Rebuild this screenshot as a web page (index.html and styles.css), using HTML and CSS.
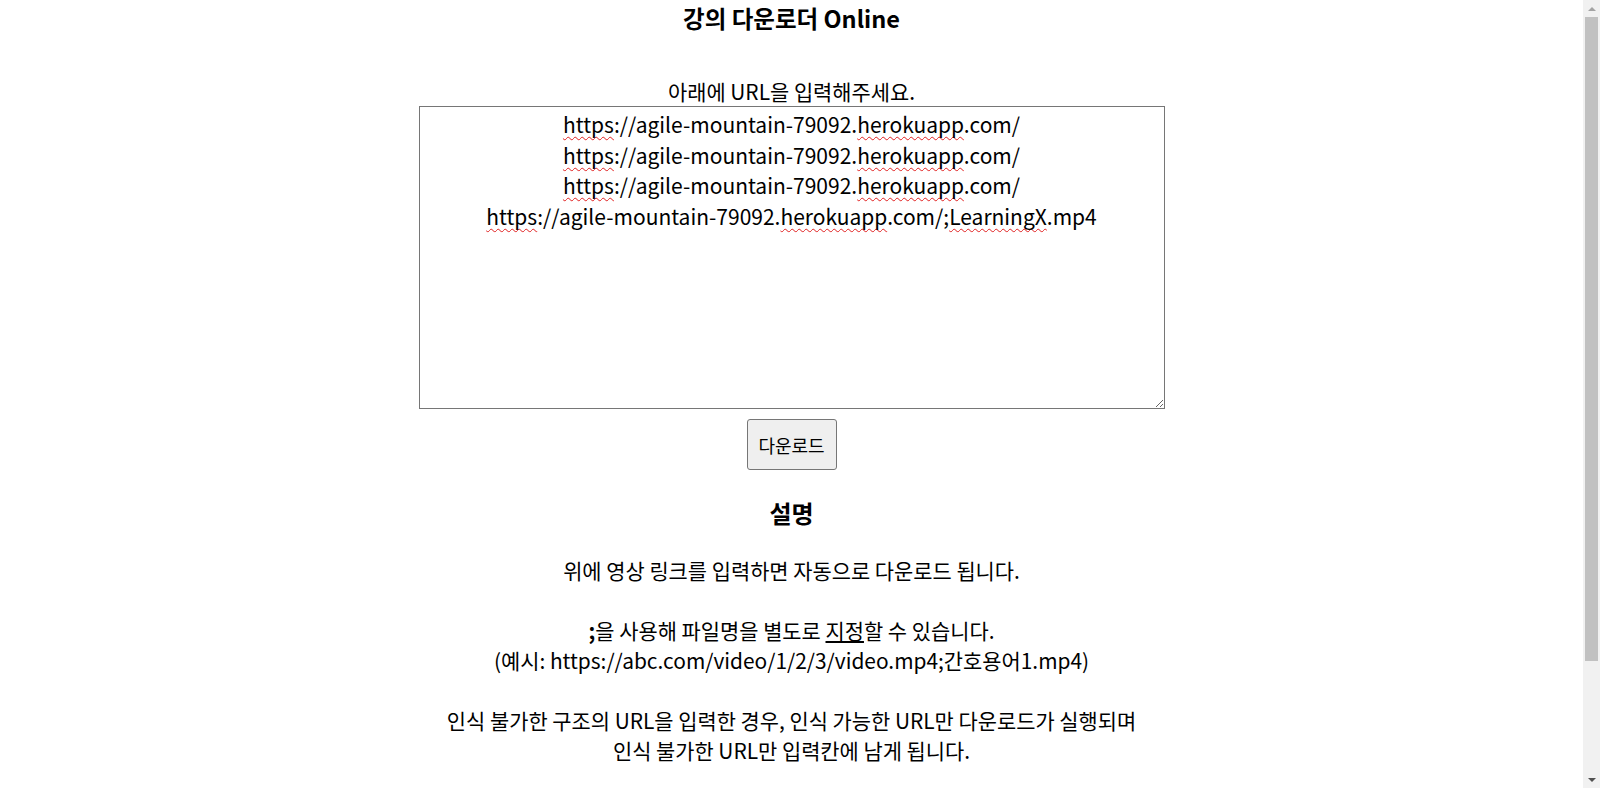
FILE: index.html
```html
<!DOCTYPE html>
<html lang="ko">
<head>
<meta charset="utf-8">
<title>강의 다운로더 Online</title>
<link rel="stylesheet" href="styles.css">
</head>
<body>
<div class="viewport">
  <main class="page">
    <h1 class="title">강의 다운로더 Online</h1>
    <form class="form">
      <label class="label" id="urls-label">아래에 URL을 입력해주세요.</label>
      <div class="urls" role="textbox" aria-multiline="true" aria-labelledby="urls-label" contenteditable="true" spellcheck="false"><div><span class="typo">https</span>://agile-mountain-79092.<span class="typo">herokuapp</span>.com/</div><div><span class="typo">https</span>://agile-mountain-79092.<span class="typo">herokuapp</span>.com/</div><div><span class="typo">https</span>://agile-mountain-79092.<span class="typo">herokuapp</span>.com/</div><div><span class="typo">https</span>://agile-mountain-79092.<span class="typo">herokuapp</span>.com/;<span class="typo">LearningX</span>.mp4</div></div>
      <button type="button" class="btn">다운로드</button>
    </form>
    <h2 class="subtitle">설명</h2>
    <p class="desc">위에 영상 링크를 입력하면 자동으로 다운로드 됩니다.<br><br><b class="semi">;</b>을 사용해 파일명을 별도로 <u>지정</u>할 수 있습니다.<br>(예시: https://abc.com/video/1/2/3/video.mp4;간호용어1.mp4)<br><br>인식 불가한 구조의 URL을 입력한 경우, 인식 가능한 URL만 다운로드가 실행되며<br>인식 불가한 URL만 입력칸에 남게 됩니다.</p>
  </main>
  <div class="scrollbar" aria-hidden="true">
    <div class="sb-btn sb-up"><span class="arrow-up"></span></div>
    <div class="sb-track"><div class="sb-thumb"></div></div>
    <div class="sb-btn sb-down"><span class="arrow-down"></span></div>
  </div>
</div>
</body>
</html>
```
FILE: styles.css
```css
html, body {
  margin: 0;
  padding: 0;
  height: 100%;
  overflow: hidden;
  background: #fff;
}
body {
  font-family: "Noto Sans CJK KR", "Noto Sans", sans-serif;
  font-feature-settings: "locl" 0;
  font-size: 20.9px;
  line-height: 30px;
  color: #000;
}
.viewport {
  display: flex;
  height: 100%;
}
.page {
  flex: 1;
  min-width: 0;
  overflow-y: auto;
  scrollbar-width: none;
  display: flex;
  flex-direction: column;
  align-items: center;
  text-align: center;
}
.page::after {
  content: "";
  flex: 0 0 158px;
}
.title {
  margin: 0;
  font-size: 23.5px;
  line-height: 36px;
  font-weight: 700;
}
.form {
  margin-top: 40px;
  display: flex;
  flex-direction: column;
  align-items: center;
}
.label {
  display: block;
}
.urls {
  box-sizing: border-box;
  width: 746px;
  height: 303px;
  flex: none;
  margin: 0;
  padding: 2px;
  border: 1px solid #767676;
  font-size: 21px;
  line-height: 30.5px;
  text-align: center;
  color: #000;
  resize: both;
  overflow: auto;
  outline: none;
}
.typo {
  text-decoration: underline wavy #e02020;
  text-decoration-thickness: 1px;
  text-underline-offset: 3px;
  text-decoration-skip-ink: none;
}
.btn {
  box-sizing: border-box;
  margin-top: 10px;
  width: 90px;
  height: 51px;
  padding: 0;
  background: #efefef;
  border: 1px solid #767676;
  border-radius: 3px;
  font-family: "Noto Sans CJK KR", sans-serif;
  font-feature-settings: "locl" 0;
  font-size: 18px;
  color: #000;
}
.subtitle {
  margin: 25px 0 0;
  font-size: 24px;
  line-height: 36px;
  font-weight: 700;
}
.desc {
  margin: 24px 0 0;
}
.semi {
  font-weight: 700;
}

/* decorative scrollbar */
.scrollbar {
  flex: 0 0 17px;
  display: flex;
  flex-direction: column;
  background: #f1f1f1;
}
.sb-btn {
  flex: 0 0 17px;
  display: flex;
  align-items: center;
  justify-content: center;
}
.arrow-up {
  width: 0;
  height: 0;
  border-left: 4px solid transparent;
  border-right: 4px solid transparent;
  border-bottom: 4px solid #a3a3a3;
}
.arrow-down {
  width: 0;
  height: 0;
  border-left: 4px solid transparent;
  border-right: 4px solid transparent;
  border-top: 4px solid #505050;
}
.sb-track {
  flex: 1;
  padding: 0 2px;
}
.sb-thumb {
  height: 644px;
  background: #c1c1c1;
}
```
